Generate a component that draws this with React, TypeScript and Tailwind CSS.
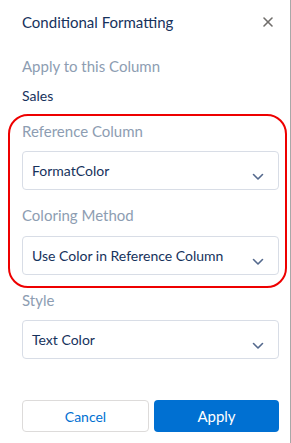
import { X } from 'lucide-react';

const Chevron = () => (
  <svg width="12" height="8" viewBox="0 0 12 8" className="mt-[12px]">
    <polyline points="1.5,1.5 6,6 10.5,1.5" fill="none" stroke="#54698d" strokeWidth="1.6" strokeLinecap="round" strokeLinejoin="round" />
  </svg>
);

const SelectBox = ({ value, className = '' }: { value: string; className?: string }) => (
  <div
    className={`flex h-[39px] items-center justify-between rounded-[4px] border border-[#d8dde6] bg-white pl-[9px] pr-[14px] ${className}`}
  >
    <span className="text-[14px] text-[#16325c]">{value}</span>
    <Chevron />
  </div>
);

const Label = ({ children, className = '' }: { children: string; className?: string }) => (
  <div className={`h-[20px] text-[15px] leading-[20px] text-[#8d9db2] ${className}`}>{children}</div>
);

export default function App() {
  return (
    <div
      className="h-[443px] w-[291px] border-r border-[#a8a8a8] bg-white pl-[22px] pr-[11px]"
      style={{ fontFamily: 'Lato, "Open Sans", sans-serif' }}
    >
      <div className="flex h-[44px] items-center justify-between">
        <span className="text-[15px] text-[#16325c]">Conditional Formatting</span>
        <X className="mr-[3px] h-[16px] w-[16px] text-[#706e6b]" strokeWidth={2.4} />
      </div>

      <Label className="mt-[12px]">Apply to this Column</Label>
      <div className="mt-[10px] h-[20px] text-[14px] leading-[20px] text-[#16325c]">Sales</div>

      <div className="-ml-[14px] -mr-[8px] mt-[8px] rounded-[20px] border-2 border-[#ee0000] pb-[11px] pl-[12px] pr-[6px] pt-[5px]">
        <Label>Reference Column</Label>
        <SelectBox value="FormatColor" className="mt-[10px]" />
        <Label className="mt-[15px]">Coloring Method</Label>
        <SelectBox value="Use Color in Reference Column" className="mt-[11px] h-[38px]" />
      </div>

      <Label className="mt-[2px]">Style</Label>
      <SelectBox value="Text Color" className="mt-[10px]" />

      <div className="mt-[41px] flex gap-[5px]">
        <button className="h-[32px] flex-1 rounded-[4px] border border-[#dddbda] bg-white text-[14px] text-[#0070d2]">
          Cancel
        </button>
        <button className="h-[32px] flex-1 rounded-[4px] bg-[#0070d2] text-[15px] text-white">Apply</button>
      </div>
    </div>
  );
}
